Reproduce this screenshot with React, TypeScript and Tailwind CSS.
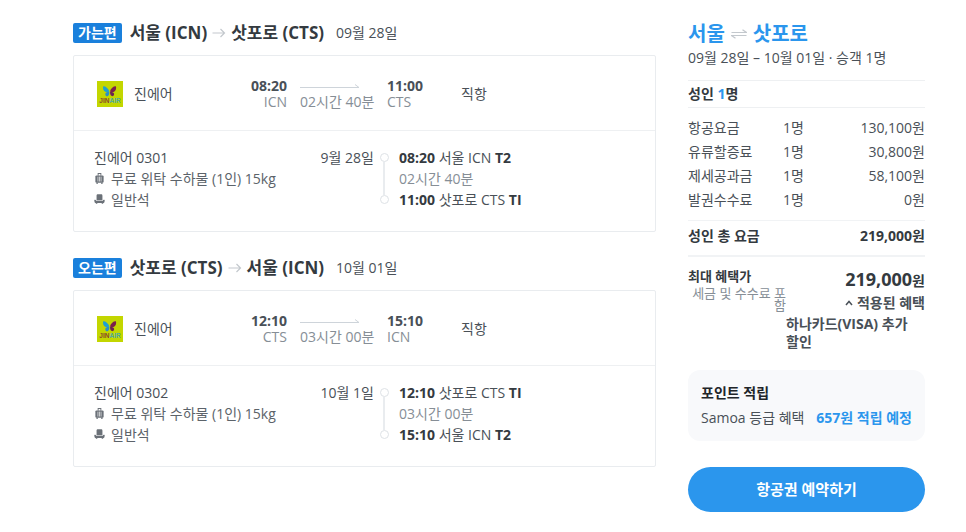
import { useState } from 'react';

type Stop = { time: string; city: string; code: string; terminal: string };

type Leg = {
  label: string;
  date: string;
  shortDate: string;
  flight: string;
  duration: string;
  from: Stop;
  to: Stop;
};

const legs: Leg[] = [
  {
    label: '가는편',
    date: '09월 28일',
    shortDate: '9월 28일',
    flight: '진에어 0301',
    duration: '02시간 40분',
    from: { time: '08:20', city: '서울', code: 'ICN', terminal: 'T2' },
    to: { time: '11:00', city: '삿포로', code: 'CTS', terminal: 'TI' },
  },
  {
    label: '오는편',
    date: '10월 01일',
    shortDate: '10월 1일',
    flight: '진에어 0302',
    duration: '03시간 00분',
    from: { time: '12:10', city: '삿포로', code: 'CTS', terminal: 'TI' },
    to: { time: '15:10', city: '서울', code: 'ICN', terminal: 'T2' },
  },
];

const fares = [
  { name: '항공요금', count: '1명', price: '130,100원' },
  { name: '유류할증료', count: '1명', price: '30,800원' },
  { name: '제세공과금', count: '1명', price: '58,100원' },
  { name: '발권수수료', count: '1명', price: '0원' },
];

function AirlineLogo() {
  return (
    <svg viewBox="0 0 26 26" className="h-[26px] w-[26px] shrink-0" role="img" aria-label="진에어">
      <rect width="26" height="26" fill="#c3d600" />
      <path d="M12.500 10.500C11 7 8.500 5 6.200 5.200c-.6 2 .2 4.600 2 5.600 1.300.5 3 .3 4.300-.3z" fill="#1fa0cf" />
      <path d="M12.300 11c-2-.2-3.800.4-4 1.900-.1 1.700 1.200 2.700 2.300 2.300 1.300-.5 1.900-2.500 1.700-4.200z" fill="#2b8fc4" />
      <path d="M12.900 10.500C14 7 16.500 5 18.900 5.200c.7 2-.1 4.500-1.800 5.500-1.200.6-2.900.4-4.200-.2z" fill="#7b1f4b" />
      <path d="M13.100 11c1.900-.2 3.800.3 4 1.800.2 1.700-1.100 2.700-2.300 2.300-1.300-.5-1.900-2.400-1.700-4.100z" fill="#6d2450" />
      <text x="13" y="21.500" textAnchor="middle" fontSize="6.500" className="font-['Liberation_Sans',sans-serif] font-bold">
        <tspan fill="#8a4a2a">JIN</tspan>
        <tspan fill="#4fa9a0">AIR</tspan>
      </text>
    </svg>
  );
}

function LuggageIcon() {
  return (
    <svg viewBox="0 0 12 12" className="h-[11px] w-[11px] shrink-0" fill="#6b7178" aria-hidden="true">
      <path d="M4 0h4v3H7V1H5v2H4z" />
      <rect x="1.500" y="2.600" width="9" height="8" rx="1.300" />
      <path d="M2.700 10.400h1.400V12H2.700zM7.900 10.400h1.400V12H7.900z" />
      <path d="M4.300 4v5.300M6 4v5.300M7.700 4v5.300" stroke="#fff" strokeWidth=".7" />
    </svg>
  );
}

function SeatIcon() {
  return (
    <svg viewBox="0 0 12 12" className="h-[11px] w-[11px] shrink-0" fill="#6b7178" aria-hidden="true">
      <path d="M2.800 1.800C2.800.8 3.400.3 4.300.3h3.400c.9 0 1.500.5 1.500 1.500v5H2.800z" />
      <path d="M1.200 6.200c.7 0 1 .4 1.100 1.200h7.400c.1-.8.4-1.200 1.100-1.200.7 0 1 .6.9 1.200l-.4 1.600c-.1.500-.4.700-.9.700H1.600c-.5 0-.8-.2-.9-.7L.3 7.400c-.1-.6.2-1.200.9-1.200z" />
      <path d="M2 9.500h1.600v1.200H2zM8.400 9.500H10v1.200H8.400z" />
    </svg>
  );
}

function HeadingArrow() {
  return (
    <svg viewBox="0 0 14 12" className="h-3 w-[14px] shrink-0" fill="none" stroke="#c3c8cd" strokeWidth="1.200" aria-hidden="true">
      <path d="M.5 6h12M8.500 2l4 4-4 4" />
    </svg>
  );
}

function Timeline() {
  return (
    <div className="flex flex-col items-center py-[6px]">
      <span className="h-[9px] w-[9px] rounded-full border border-[#dee2e6]" />
      <span className="w-[2px] flex-1 bg-[#e9ecef]" />
      <span className="h-[9px] w-[9px] rounded-full border border-[#dee2e6]" />
    </div>
  );
}

function FlightLeg({ leg }: { leg: Leg }) {
  return (
    <section>
      <h2 className="flex h-5 items-center text-[17px] font-bold whitespace-nowrap text-[#343a40]">
        <span className="mr-2 flex h-5 items-center rounded-xs bg-[#1a80dc] px-[5px] text-sm text-white">{leg.label}</span>
        <span>{leg.from.city} ({leg.from.code})</span>
        <span className="mx-[5px]"><HeadingArrow /></span>
        <span>{leg.to.city} ({leg.to.code})</span>
        <span className="ml-3 text-sm font-normal text-[#495057]">{leg.date}</span>
      </h2>

      <div className="mt-3 rounded-xs border border-[#e9ecef]">
        <div className="grid h-[75px] grid-cols-[130px_60px_100px_74px_1fr] items-center border-b border-[#eef0f2] px-[23px] pt-0.5">
          <div className="flex items-center gap-[11px]">
            <AirlineLogo />
            <span className="text-[#495057]">진에어</span>
          </div>
          <div className="text-right leading-4">
            <p className="font-bold text-[#495057]">{leg.from.time}</p>
            <p className="text-[#868e96]">{leg.from.code}</p>
          </div>
          <div className="px-[13px] leading-4 whitespace-nowrap">
            <span className="flex h-4 items-center">
              <svg viewBox="0 0 60 6" className="h-[6px] w-[60px]" fill="none" stroke="#ced4da" aria-hidden="true">
                <path d="M0 4.500h59l-4-3" />
              </svg>
            </span>
            <span className="text-[#868e96]">{leg.duration}</span>
          </div>
          <div className="leading-4">
            <p className="font-bold text-[#495057]">{leg.to.time}</p>
            <p className="text-[#868e96]">{leg.to.code}</p>
          </div>
          <span className="text-[#495057]">직항</span>
        </div>

        <div className="grid grid-cols-[280px_20px_1fr] px-5 pt-4 pb-[21px] leading-[21px]">
          <div>
            <div className="flex justify-between text-[#495057]">
              <span>{leg.flight}</span>
              <span>{leg.shortDate}</span>
            </div>
            <p className="flex items-center gap-1.5 text-[#5c636a]"><LuggageIcon />무료 위탁 수하물 (1인) 15kg</p>
            <p className="flex items-center gap-1.5 text-[#5c636a]"><SeatIcon />일반석</p>
          </div>
          <Timeline />
          <div className="pl-[5px] text-[#495057]">
            <p><b className="text-[#343a40]">{leg.from.time}</b> {leg.from.city} {leg.from.code} <b className="text-[#343a40]">{leg.from.terminal}</b></p>
            <p className="text-[#868e96]">{leg.duration}</p>
            <p><b className="text-[#343a40]">{leg.to.time}</b> {leg.to.city} {leg.to.code} <b className="text-[#343a40]">{leg.to.terminal}</b></p>
          </div>
        </div>
      </div>
    </section>
  );
}

function FareSummary() {
  const [open, setOpen] = useState(true);

  return (
    <aside className="w-[237px] shrink-0">
      <h1 className="flex h-6 items-center gap-1.5 text-xl font-bold text-[#2b96ed]">
        서울
        <svg viewBox="0 0 16 10" className="h-[10px] w-4" fill="none" stroke="#c3c8cd" strokeWidth="1.200" aria-hidden="true">
          <path d="M.5 3.500h15L11.500.7M15.500 6.500H.5l4 2.800" />
        </svg>
        삿포로
      </h1>
      <p className="mt-0.5 text-[#495057]">09월 28일 – 10월 01일 · 승객 1명</p>

      <table className="mt-3 w-full">
        <caption className="mb-2 border-y border-[#eef0f2] py-[3px] text-left font-bold text-[#343a40]">
          성인 <span className="text-[#2b96ed]">1</span>명
        </caption>
        <tbody className="leading-6 text-[#495057]">
          {fares.map((fare) => (
            <tr key={fare.name}>
              <th scope="row" className="w-[95px] text-left font-normal">{fare.name}</th>
              <td>{fare.count}</td>
              <td className="text-right">{fare.price}</td>
            </tr>
          ))}
        </tbody>
      </table>
      <div className="mt-2 flex justify-between border-t border-b-2 border-[#f1f3f5] pt-[5px] pb-[9px] font-bold text-[#343a40]">
        <span>성인 총 요금</span>
        <span>219,000원</span>
      </div>

      <div className="mt-[10px] flex justify-between">
        <div className="w-[98px]">
          <p className="text-[13px] leading-[18px] font-bold text-[#343a40]">최대 혜택가</p>
          <p className="mt-0.5 text-right text-[13px] leading-3 text-[#868e96]">세금 및 수수료 포함</p>
        </div>
        <div className="w-[139px] text-[#495057]">
          <p className="text-right leading-6 font-semibold text-[#343a40]">
            <span className="text-lg leading-6 font-bold">219,000</span>원
          </p>
          <button
            type="button"
            aria-expanded={open}
            onClick={() => setOpen(!open)}
            className="ml-auto flex cursor-pointer items-center gap-1 font-bold"
          >
            <svg viewBox="0 0 8 6" className={`h-[6px] w-2 ${open ? '' : 'rotate-180'}`} fill="none" stroke="#495057" strokeWidth="1.500" aria-hidden="true">
              <path d="M1 5l3-3.500L7 5" />
            </svg>
            적용된 혜택
          </button>
          {open && <p className="mt-0.5 leading-[18px] font-bold break-keep">하나카드(VISA) 추가 할인</p>}
        </div>
      </div>

      <div className="mt-[19px] rounded-xl bg-[#f8f9fb] px-[13px] py-[13px]">
        <h2 className="font-bold text-[#212529]">포인트 적립</h2>
        <p className="mt-[5px] flex justify-between whitespace-nowrap text-[#495057]">
          Samoa 등급 혜택 <b className="text-[#2b96ed]">657원 적립 예정</b>
        </p>
      </div>

      <button type="button" className="mt-[26px] h-[45px] w-full cursor-pointer rounded-full bg-[#2b96ed] text-[15px] font-bold text-white">
        항공권 예약하기
      </button>
    </aside>
  );
}

export default function App() {
  return (
    <div className="min-h-screen bg-white font-['Open_Sans','Noto_Sans_CJK_KR',sans-serif] text-sm">
      <div className="flex gap-8 pr-[41px] pl-[73px]">
        <main className="min-w-0 flex-1 space-y-[26px] pt-[23px]">
          {legs.map((leg) => (
            <FlightLeg key={leg.label} leg={leg} />
          ))}
        </main>
        <div className="pt-[22px]">
          <FareSummary />
        </div>
      </div>
    </div>
  );
}
